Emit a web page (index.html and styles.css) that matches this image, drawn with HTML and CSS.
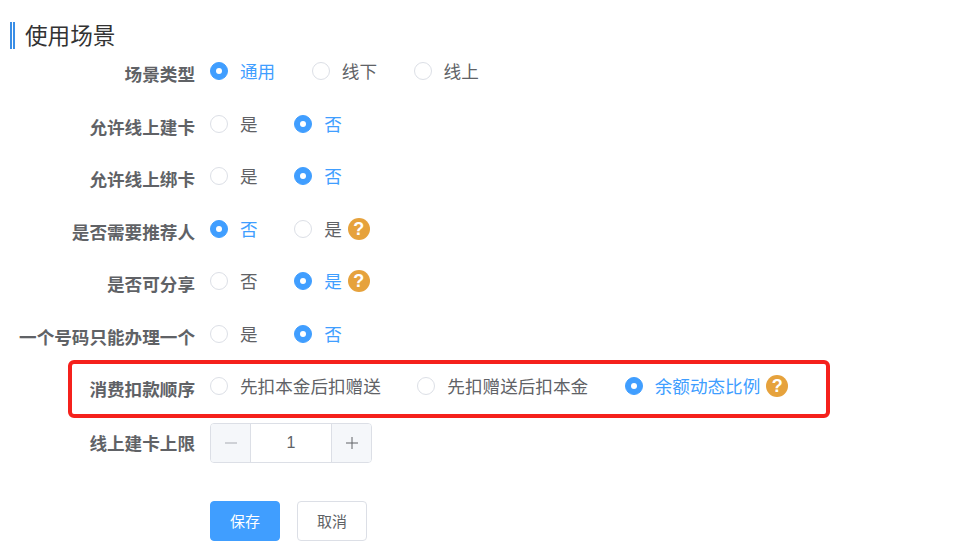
FILE: index.html
```html
<!DOCTYPE html>
<html lang="zh">
<head>
<meta charset="utf-8">
<title>使用场景</title>
<link rel="stylesheet" href="styles.css">
</head>
<body>
<main class="page">
  <h2 class="title">使用场景</h2>
  <form class="form">
    <div class="row">
      <span class="label">场景类型</span>
      <div class="group">
        <span class="radio on"><i class="dot"></i>通用</span>
        <span class="radio"><i class="dot"></i>线下</span>
        <span class="radio"><i class="dot"></i>线上</span>
      </div>
    </div>
    <div class="row">
      <span class="label">允许线上建卡</span>
      <div class="group">
        <span class="radio"><i class="dot"></i>是</span>
        <span class="radio on"><i class="dot"></i>否</span>
      </div>
    </div>
    <div class="row">
      <span class="label">允许线上绑卡</span>
      <div class="group">
        <span class="radio"><i class="dot"></i>是</span>
        <span class="radio on"><i class="dot"></i>否</span>
      </div>
    </div>
    <div class="row">
      <span class="label">是否需要推荐人</span>
      <div class="group">
        <span class="radio on"><i class="dot"></i>否</span>
        <span class="radio"><i class="dot"></i>是<b class="help">?</b></span>
      </div>
    </div>
    <div class="row">
      <span class="label">是否可分享</span>
      <div class="group">
        <span class="radio"><i class="dot"></i>否</span>
        <span class="radio on"><i class="dot"></i>是<b class="help">?</b></span>
      </div>
    </div>
    <div class="row">
      <span class="label">一个号码只能办理一个</span>
      <div class="group">
        <span class="radio"><i class="dot"></i>是</span>
        <span class="radio on"><i class="dot"></i>否</span>
      </div>
    </div>
    <div class="row">
      <span class="label">消费扣款顺序</span>
      <div class="group">
        <span class="radio"><i class="dot"></i>先扣本金后扣赠送</span>
        <span class="radio"><i class="dot"></i>先扣赠送后扣本金</span>
        <span class="radio on"><i class="dot"></i>余额动态比例<b class="help">?</b></span>
      </div>
      <div class="mark"></div>
    </div>
    <div class="row row-stepper">
      <span class="label label-stepper">线上建卡上限</span>
      <div class="stepper">
        <span class="step minus"><svg class="glyph" viewBox="0 0 14 14"><path d="M1 7h12" /></svg></span>
        <span class="value">1</span>
        <span class="step plus"><svg class="glyph" viewBox="0 0 14 14"><path d="M1 7h12M7 1v12" /></svg></span>
      </div>
    </div>
    <div class="actions">
      <button type="button" class="btn primary">保存</button>
      <button type="button" class="btn">取消</button>
    </div>
  </form>
</main>
</body>
</html>
```
FILE: styles.css
```css
* { box-sizing: border-box; }
html, body { margin: 0; padding: 0; background: #fff; }
body {
  width: 965px;
  height: 557px;
  overflow: hidden;
  font-family: "Noto Sans CJK SC", "Noto Sans", sans-serif;
  color: #606266;
}
.page { padding: 22px 0 0 10px; }
.title {
  margin: 0 0 -4px;
  height: 27px;
  padding-left: 10px;
  border-left: 5px double #3a8ee6;
  font-size: 22.6px;
  font-weight: 400;
  line-height: 26px;
  color: #333;
}
.form { position: relative; margin-left: -10px; }
.row {
  position: relative;
  display: flex;
  align-items: center;
  height: 52.5px;
}
.label {
  width: 195px;
  flex: none;
  padding-top: 6px;
  text-align: right;
  font-size: 17.6px;
  font-weight: 700;
  line-height: 24px;
  color: #606266;
}
.label-stepper { padding-top: 0; }
.group { display: flex; margin-left: 15px; gap: 36.6px; }
.radio {
  display: flex;
  align-items: center;
  height: 24px;
  font-size: 17.6px;
  line-height: 24px;
  color: #606266;
}
.radio.on { color: #409eff; }
.dot {
  position: relative;
  width: 18px;
  height: 18px;
  margin-right: 12px;
  border: 1px solid #dcdfe6;
  border-radius: 50%;
  background: #fff;
}
.on .dot { border-color: #409eff; background: #409eff; }
.on .dot::after {
  content: "";
  position: absolute;
  left: 5px;
  top: 5px;
  width: 6px;
  height: 6px;
  border-radius: 50%;
  background: #fff;
}
.help {
  width: 22px;
  height: 22px;
  margin-left: 6px;
  border-radius: 50%;
  background: #e6a23c;
  color: #fff;
  font-family: "Liberation Sans", sans-serif;
  font-size: 18px;
  font-weight: 700;
  line-height: 22px;
  text-align: center;
}
.mark {
  position: absolute;
  left: 68px;
  top: 0;
  width: 762px;
  height: 58px;
  border: 4px solid #f5211c;
  border-radius: 6px;
}
.row-stepper { height: 58px; margin-top: 1px; }
.stepper {
  display: flex;
  width: 162px;
  height: 40px;
  margin-left: 15px;
  border: 1px solid #dcdfe6;
  border-radius: 4px;
  overflow: hidden;
}
.step {
  display: flex;
  align-items: center;
  justify-content: center;
  width: 40px;
  flex: none;
  background: #f5f7fa;
  color: #606266;
}
.minus { border-right: 1px solid #dcdfe6; color: #a8abb2; }
.plus { border-left: 1px solid #dcdfe6; }
.glyph { width: 14px; height: 14px; fill: none; stroke: currentColor; stroke-width: 1; }
.value {
  flex: 1;
  font-family: "Liberation Sans", sans-serif;
  font-size: 16px;
  line-height: 38px;
  text-align: center;
}
.actions { display: flex; gap: 17px; margin: 29px 0 0 210px; }
.btn {
  width: 70px;
  height: 40px;
  padding: 0;
  border: 1px solid #dcdfe6;
  border-radius: 4px;
  background: #fff;
  font-family: inherit;
  font-size: 15px;
  color: #606266;
}
.btn.primary { border-color: #409eff; background: #409eff; color: #fff; }
```
